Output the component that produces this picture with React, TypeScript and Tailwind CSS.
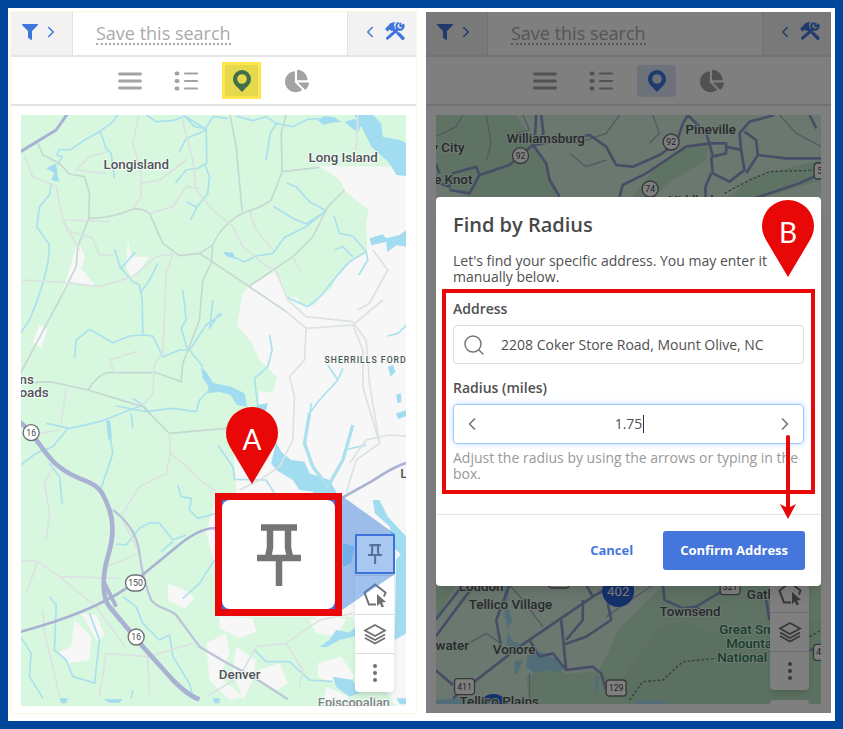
import type { ReactNode } from 'react';
import { FaChartPie, FaFilter } from 'react-icons/fa';
import { ChevronLeft, ChevronRight, Search } from 'lucide-react';
import clsx from 'clsx';

// Both maps are drawn on a grid of three units per pixel.
const ROAD = '#a9b2d3';
const MINOR = '#c6d8d3';
const WATER = '#a2dcf0';

function MarkerIcon({ className }: { className?: string }) {
  return (
    <svg viewBox="0 0 18 22" className={className} fill="currentColor" aria-hidden="true">
      <path
        fillRule="evenodd"
        d="M9 0a9 9 0 0 0-9 9c0 5.500 5 8.500 9 13 4-4.500 9-7.500 9-13a9 9 0 0 0-9-9Zm0 4.200a4.800 4.800 0 1 1 0 9.600 4.800 4.800 0 0 1 0-9.600Z"
      />
    </svg>
  );
}

function ToolsIcon() {
  return (
    <svg viewBox="0 0 24 22" className="w-5" fill="none" stroke="currentColor" aria-hidden="true">
      <path d="M3 19.500 15.500 8.500" strokeWidth="3.600" strokeLinecap="round" />
      <path d="M21.500 2.500a4.300 4.300 0 1 1-5-1.500M18.500 1v4h4" strokeWidth="2.600" />
      <path d="m9 7.500 4 4M16 14l5.500 5.500" strokeWidth="4" strokeLinecap="round" />
      <path d="M0 8.500 3 5l1-.500C6 1 9 0 13 .5c-2 1-2.500 2-2 4l1 1.500-4.500 5-2-2L3 11.500Z" fill="currentColor" stroke="none" />
    </svg>
  );
}

function PushpinIcon({ className }: { className?: string }) {
  return (
    <svg viewBox="0 0 44 62" className={className} fill="none" stroke="currentColor" strokeWidth="6.500" aria-hidden="true">
      <path d="M4 3.500h36M13 4v20l-2 9M31 4v20l2 9M0 34h44M22 34v28" />
    </svg>
  );
}

function PolygonIcon() {
  return (
    <svg viewBox="0 0 24 24" className="size-6" fill="none" stroke="currentColor" strokeWidth="2" aria-hidden="true">
      <path d="M13 21.500H6L1.500 9.500 12 1.500l10.500 8-1.500 4" />
      <path d="m14 11 9 8-4 .5 2 4-2.500 1-1.500-4-3 2.500Z" fill="currentColor" stroke="none" />
    </svg>
  );
}

function LayersIcon() {
  return (
    <svg viewBox="0 0 24 22" className="w-6" fill="none" stroke="currentColor" strokeWidth="1.800" aria-hidden="true">
      <path d="M12 2 22 7.500 12 13 2 7.500Z" />
      <path d="m2 11.500 10 5.500 10-5.500M2 15l10 5.500L22 15" />
    </svg>
  );
}

function DotsIcon() {
  return (
    <svg viewBox="0 0 4 20" className="h-5" fill="currentColor" aria-hidden="true">
      <circle cx="2" cy="3" r="2" />
      <circle cx="2" cy="10" r="2" />
      <circle cx="2" cy="17" r="2" />
    </svg>
  );
}

function BarsIcon() {
  return (
    <svg viewBox="0 0 24 18" className="w-6" stroke="currentColor" strokeWidth="2.800" strokeLinecap="round" aria-hidden="true">
      <path d="M1.500 2h21M1.500 9h21M1.500 16h21" />
    </svg>
  );
}

function ListIcon() {
  return (
    <svg viewBox="0 0 24 20" className="w-6" stroke="currentColor" strokeWidth="2.200" strokeLinecap="round" aria-hidden="true">
      <path d="M11 2.500h12M11 10h12M11 17.500h12" />
      <path d="M2.500 2.500h1M2.500 10h1M2.500 17.500h1" strokeWidth="4" />
    </svg>
  );
}

function PanelHeader() {
  return (
    <header className="flex h-[45px] border-b-2 border-[#e6e6e6]">
      <button aria-label="Filters" className="flex w-[62px] items-center gap-1 border-r border-[#e3e3e3] bg-[#f2f2f2] pb-1 pl-[11px] text-[#3f76dc]">
        <FaFilter className="size-4" />
        <ChevronRight className="size-[18px]" />
      </button>
      <div className="flex flex-1 items-center pl-[23px]">
        <a href="#save" className="border-b-2 border-dotted border-[#aaa] text-lg leading-5 font-medium text-[#ababab]">
          Save this search
        </a>
      </div>
      <button aria-label="Tools" className="flex w-[69px] items-center justify-end gap-1.5 border-l border-[#e3e3e3] bg-[#f2f2f2] pb-1 pr-[11px] text-[#3f76dc]">
        <ChevronLeft className="size-[18px]" />
        <ToolsIcon />
      </button>
    </header>
  );
}

function ViewTabs({ highlight = false }: { highlight?: boolean }) {
  return (
    <nav className="flex h-[49px] items-center justify-center gap-4 border-b-2 border-[#e3e3e3] text-[#a3a3a3]">
      <button aria-label="Table view" className="flex w-10 justify-center"><BarsIcon /></button>
      <button aria-label="List view" className="flex w-10 justify-center"><ListIcon /></button>
      <button
        aria-label="Map view"
        className={clsx(
          'flex w-[39px] items-center justify-center',
          highlight ? 'h-[37px] border-[3px] border-[#ffe64c] bg-[#e5d94b] text-[#3f7049]' : 'h-8 rounded bg-[#d9e3f5] text-[#3f76dc]',
        )}
      >
        <MarkerIcon className="h-[22px]" />
      </button>
      <button aria-label="Chart view" className="flex w-10 justify-center"><FaChartPie className="size-6" /></button>
    </nav>
  );
}

function MapToolbar() {
  const item = 'flex h-[39px] items-center justify-center border-t border-[#ddd]';
  return (
    <div className="absolute right-3 bottom-3.5 flex w-[39px] flex-col rounded bg-white text-[#707070] shadow-md">
      <button aria-label="Find by radius" className="flex h-10 items-center justify-center"><PushpinIcon className="h-5" /></button>
      <button aria-label="Draw area" className={item}><PolygonIcon /></button>
      <button aria-label="Layers" className={item}><LayersIcon /></button>
      <button aria-label="More" className={item}><DotsIcon /></button>
    </div>
  );
}

type Label = { x: number; y: number; text: string; size?: number; fill?: string; spacing?: boolean };

function MapLabels({ labels, halo }: { labels: Label[]; halo: string }) {
  return (
    <g fontFamily="Roboto, sans-serif" fontWeight="500" stroke={halo} strokeWidth="6" paintOrder="stroke" strokeLinejoin="round">
      {labels.map((l) => (
        <text key={l.text} x={l.x} y={l.y} fontSize={l.size ?? 40} fill={l.fill ?? '#50535a'} className={l.spacing ? 'tracking-[3px]' : undefined}>
          {l.text}
        </text>
      ))}
    </g>
  );
}

function Shield({ x, y, text, square = false }: { x: number; y: number; text: string; square?: boolean }) {
  const w = text.length > 2 ? 60 : 48;
  return (
    <g>
      <rect x={x - w / 2} y={y - 24} width={w} height="48" rx={square ? 10 : 24} fill="#fff" stroke="#6c7075" strokeWidth="4" />
      <text x={x} y={y + 9} fontSize="26" textAnchor="middle" fontFamily="Roboto, sans-serif" fill="#45484d">
        {text}
      </text>
    </g>
  );
}

const denverLabels: Label[] = [
  { x: 312, y: 506, text: 'Longisland' },
  { x: 927, y: 486, text: 'Long Island' },
  { x: 975, y: 1088, text: 'SHERRILLS FORD', size: 26, spacing: true },
  { x: 60, y: 1151, text: 'ns' },
  { x: 60, y: 1192, text: 'oads' },
  { x: 658, y: 2036, text: 'Denver' },
  { x: 1202, y: 1434, text: 'L' },
  { x: 955, y: 2122, text: 'Episcopalian', size: 38, fill: '#7d8388' },
];

function DenverMap() {
  return (
    <svg viewBox="63 345 1158 1773" preserveAspectRatio="xMidYMid slice" className="size-full" role="img" aria-label="Map around Denver">
      <rect x="63" y="345" width="1158" height="1773" fill="#d8f7df" />
      <g fill="#f7f7f7">
        <path d="M960 498 1020 540 1040 575 1108 630 1100 670 1103 755 1050 785 1010 830 1000 860 962 890 950 912 925 920 905 910 890 890 865 893 845 845 825 815 750 858 730 878 712 975 755 1025 780 1080 832 1130 820 1178 780 1172 775 1230 700 1320 712 1480 650 1490 620 1600 645 1690 650 1850 1060 1850 1080 1960 1190 2118H1221V500Z" />
        <path d="M235 725 257 770 245 805 290 860 210 845 185 885 215 790ZM385 720 395 770 450 770 400 840 380 800ZM120 975l24 10-18 60-26-20ZM225 1860l50 50-5 70-60 10-40-30 45-20ZM505 1750l60 25 20 20-30 30-50-25ZM245 1840l45 5 25 60-20 20-30-50ZM660 1850l100 5 10 40-50 20-60-30ZM620 1930l60-30 10 60-30 70 70 60-40 10-60-60ZM710 1940l60 40-10 60-30 60-30-90ZM780 2010l60-20 25 60-30 20-55-20ZM930 1860l60-20 50 20-30 50-60-10ZM955 1990l70-20 40 60-30 30-80-30ZM980 2060l70 30-40 28-40-10Z" />
      </g>
      <path d="M905 898h52l-8 12-24 9-18-8ZM1145 345h76v120l-30-50-45-10Z" fill="#d8f7df" />
      <g fill={WATER}>
        <path d="M1065 345 1120 345 1145 370 1150 410 1200 420 1221 430V528l-30-3-25-40-50-45-25-50ZM955 360l20-12 30 4 20 14-30 2-25 6ZM1035 366l30-10 20 20-10 22ZM1110 715l40-12 10 12 40-10 21-15v50l-30-4-28 20-3-30-45 10ZM140 505l30-15 5 40 5 15-25-5 10-20ZM670 755l30 3 10 20-30-10ZM320 1260l12 2 5 50-10 10ZM605 1100l15 15 25 40-15 10-20-30ZM625 1165l20-15 50 10 40 20 8 40-30-5-20-30-35-10-30 5ZM830 1325l15 30 30 25 40 5 15 35 60 20 20 35-5 20h-60l-5-20-40-5-20-30-50-30-15-20ZM770 1215l35-5-5 20-25 5ZM1165 1100l15-5 8 20-15 15ZM1190 1185l14-5 2 25-12 5ZM1190 1240l31-10v18l-25 10ZM1190 1680l31-40V1900l-35 20ZM960 1940l30-20 20-30 40 8 20-20v30l-50 12-40 22ZM1000 2030l60 10 20 40-30 10-40-30ZM1120 1500l20 0 25 50 56 60v70l-40-40-10-60-45-40ZM1030 1630l35 10-10 50-25 10Z" />
      </g>
      <g fill="none" stroke="#abe0ee" strokeWidth="5" strokeLinejoin="round">
        <path d="M355 345 335 370 300 395 255 420 215 448 178 450 172 465 188 470 175 495M303 397 320 445 335 460 345 535M155 550 150 585 120 620 112 680 150 735 145 790 130 850 110 910 90 960 63 1000M440 345 470 365 520 362 555 348 585 380 618 385 640 350 685 355M555 348 620 388M622 385 600 400 560 415 540 455M620 388 622 490 595 505 560 510 528 548M615 492 630 530 625 580 592 622 573 660M560 605 592 622M710 348 760 362 800 350 830 370 880 380 925 358 960 355M830 372 812 400 800 480M862 550 890 560 930 605 980 632 920 672 880 655 820 618M980 632 920 680 855 712 820 760 770 768 735 785 700 770M1003 648 1020 700 1060 708 1100 755M1003 750 1030 740 1060 770M1100 755 1105 780 1078 825M1100 755 1050 785 1010 830 962 890 925 920 865 893M345 748 362 800 400 845 420 855 428 900 430 1005M407 757 362 808M475 790 450 840 425 875M550 870 560 960 545 985 565 1050M660 940 630 985 640 900M668 942 620 975 570 1050M430 1005 460 1008 490 1070 540 1050 570 1050 610 1100M430 1005 390 1008 340 1028 270 988 230 1020 225 1075M140 1270 210 1285 300 1265 430 1215 455 1245M350 1218 440 1235 520 1225 590 1235 600 1200 630 1170M400 1195 430 1215M395 1240 400 1285M205 1285 160 1340 110 1360 63 1395M330 1300 340 1360 300 1480M150 1390 180 1430 188 1510M655 1335 700 1400 705 1438 800 1440 825 1480M810 1005 818 1050 805 1100 765 1135 775 1220M985 1095 1015 1140 960 1200 930 1240M1015 1140 1030 1105M935 1210 930 1255M1035 1350 1100 1335M1221 975 1195 1000 1165 1008M535 1455 545 1490 575 1495 570 1530 595 1555 650 1540M350 1632 380 1635 420 1585 450 1568 480 1570 520 1620 560 1605M520 1625 485 1655M645 1680 600 1750 550 1795M370 1790 410 1820 430 1870 480 1920 510 1905 520 1970 570 2050 580 2090M150 1790 170 1815 165 1950 200 1980 220 2030 290 2050M270 1840 300 1920 285 2050M63 1910 95 1960 90 2030 130 2095M765 1950 800 1985 870 1985 930 2040 1000 2045M400 2070 395 2095" />
        <path d="M930 1240 915 1330 940 1400 985 1460 1030 1380 1060 1275" strokeWidth="10" />
      </g>
      <g fill="none" stroke={MINOR} strokeWidth="5" strokeLinejoin="round">
        <path d="M115 430 130 465 180 490 210 522 255 530 270 580 268 655 235 740 230 800 180 900 145 965 63 1120M268 655Q340 655 400 627 430 625 450 640L490 730 540 767 600 760 640 735Q655 700 680 675T740 635Q790 620 815 600L848 515 845 400 860 345M848 515 960 502M692 345 710 440 728 635M600 760 720 840 860 935M1035 570 985 620 940 710 880 770 750 858M640 735 635 790 610 840 600 960 550 1090 545 1145 470 1118 320 1118Q290 1130 265 1170L150 1145 63 1150M265 1170 330 1190 430 1220 460 1250 510 1300 680 1285" />
      </g>
      <g fill="none" stroke="#dbe2e2" strokeWidth="5" strokeLinejoin="round">
        <path d="M860 935 920 985 1060 975 1150 900M510 1300 512 1360 550 1390 600 1440 650 1475M512 1360 500 1420 420 1460 370 1540M75 470 100 530 170 560 190 660 240 750M418 345 400 430 425 520 425 590 400 627M560 480 480 540 425 550M545 345 580 480 590 570 640 630 700 680 730 740 790 790 830 815 865 900 920 950 1060 965 1100 1020 1110 1150 1140 1330M600 565 560 560 520 620 450 640M325 455 270 470 230 510 320 520M190 660 330 665M200 690 280 715 300 765 340 765M750 635 770 690 820 750M880 770 905 820M63 840 200 848 300 860 400 830 470 770 520 762 500 820 490 1060 465 1090 460 1180 430 1215M330 1080 410 1055M330 1080 345 1118M180 1290 120 1300M200 1165 185 1270M1075 345 1070 450M1120 750 1165 810 1110 910 1075 930M920 985 915 1080 870 1130 885 1190 880 1320 840 1400 780 1440 720 1470M1060 975 1090 1050 1090 1160 1140 1330 1070 1380 1040 1480M1165 1305 1100 1320 1050 1390M1221 1308 1165 1305M63 1680 115 1685 180 1730 360 1735M180 1730 290 1820 380 1945M115 1685 80 1780M160 1400 135 1450 150 1540 140 1620M130 1830 135 1900 160 2000 180 2090M450 2090 445 1970 320 1960 300 2090M445 1970 580 1930M360 1540 420 1660 320 1700M620 2090 720 2030 770 1940 860 1930 960 1860 1060 1840M860 1930 910 2010 900 2060" />
      </g>
      <g fill="none" stroke={ROAD} strokeLinejoin="round">
        <path d="M63 455 170 390 205 340" strokeWidth="9" />
        <path d="M340 1530Q410 1580 420 1660T455 1800C480 1830 500 1820 530 1845L600 1940Q680 1990 760 2030L865 2098" strokeWidth="7" stroke="#bcc5d8" />
        <path d="M60 1896Q270 1840 380 1765L520 1650Q600 1580 650 1585" strokeWidth="8" />
        <path d="M1030 1492 1120 1442Q1190 1395 1225 1388" strokeWidth="8" />
        <path d="M60 1265C130 1320 130 1390 240 1435C310 1460 310 1480 330 1530Q350 1590 325 1670C310 1720 305 1790 330 1820L430 1940 520 2040Q570 2090 600 2098" strokeWidth="14" />
        <path d="M315 1750 350 1820" strokeWidth="12" />
      </g>
      <path d="M180 2095h25l-5 15h-15ZM310 2098h60l-10 10h-30ZM640 2095h20v15h-15ZM1190 2095h31v18h-20Z" fill={WATER} />
      <Shield x={95} y={1298} text="16" />
      <Shield x={408} y={1749} text="150" />
      <Shield x={410} y={1911} text="16" />
      <MapLabels labels={denverLabels} halo="#f4fbf5" />
    </svg>
  );
}

const smokyLabels: Label[] = [
  { x: 262, y: 428, text: 'Williamsburg' },
  { x: 798, y: 401, text: 'Pineville' },
  { x: 36, y: 455, text: 'y City' },
  { x: 44, y: 551, text: 'e Knot' },
  { x: 745, y: 614, text: 'Middlesboro', size: 36 },
  { x: 118, y: 1774, text: 'Loudon' },
  { x: 148, y: 1827, text: 'Tellico Village' },
  { x: 720, y: 1849, text: 'Townsend' },
  { x: 982, y: 1798, text: 'Gatlinburg' },
  { x: 48, y: 1950, text: 'water' },
  { x: 220, y: 1963, text: 'Vonore' },
  { x: 120, y: 2118, text: 'Tellico Plains' },
  { x: 899, y: 1902, text: 'Great Smoky', fill: '#2f7d5c' },
  { x: 920, y: 1944, text: 'Mountains', fill: '#2f7d5c' },
  { x: 893, y: 1986, text: 'National Park', fill: '#2f7d5c' },
];

function SmokyMap() {
  return (
    <svg viewBox="48 345 1158 1767" preserveAspectRatio="xMidYMid slice" className="size-full" role="img" aria-label="Map around the Great Smoky Mountains">
      <rect x="48" y="345" width="1158" height="1767" fill="#d6f0df" />
      <path d="M48 345h240l60 85 45 100 30 60H150l-102-40ZM640 590 700 510 790 450 870 430 860 480 760 540 700 592ZM930 590l70-60 206-50v60l-180 55ZM330 2112l-10-80 60-30 60 20 100-10 60-130 200-190h550v420ZM48 1755h60l-60 110Z" fill="#bfe6c8" />
      <path d="M590 2060 720 1880 800 1860 860 1900 1206 1860V2112H620Z" fill="#b6e0c1" />
      <g fill={WATER}>
        <path d="M255 1755h15l-5 60 15 50-20 20 20 40 20 5-10 25-30-20 5-50-10-40ZM325 1965l40-10 40 20 30 20-10 25-30-10-50 10-25-20ZM285 1985l25-5-15 40-10 5ZM525 2030l15 0-5 40 5 15-12-15ZM48 2100l80-5 80 10v7H48ZM650 2100h50l40 5v7h-90Z" />
      </g>
      <g fill="none" stroke="#a9b2c4" strokeWidth="4">
        <path d="M48 410 110 380 130 345M200 345 215 430 200 480M310 345 330 390 290 400M450 460 500 500 560 480M600 345 560 400 470 430M700 345 720 400 690 430M1206 440 1130 400 1080 345M130 1940 200 1900 245 1930M270 1755 310 1800 370 1880M560 1850 700 1755M330 2020 330 2100" />
      </g>
      <g fill="none" stroke="#8f9bc9" strokeWidth="8" strokeLinejoin="round">
        <path d="M48 545 90 560 100 520 170 500 180 525 270 495 340 435 380 490 390 540 420 590M350 345 345 435M365 345 372 400 345 435M345 435 480 410 510 405 560 440 590 495 640 500 720 465 770 430 790 370 805 345M805 345 860 400 870 430 800 440 740 480 680 520 610 555 600 590M870 430 920 430 920 460 880 470 870 430M920 440 965 450 975 510 930 545 880 520 875 470M875 520 858 560 858 600M965 450 960 400 990 365 1065 345M975 395 1010 420 1015 465 980 520M1015 465 1100 475 1206 475M990 600 1080 570 1140 550 1206 520M1170 345 1190 385M48 490 60 520M180 525 150 580 90 570" />
        <path d="M48 1860 130 1755M48 1910 160 1760M100 2095 300 1940 520 1790 580 1755M230 1860 245 1940M270 1755 230 1860M425 1860 440 2010 400 1960 360 1970 330 1920M440 1920 490 1860 490 1800M430 1935 500 1910 575 1860 565 1810M440 2010 520 2000 545 2020 560 2070M500 1755 520 1790M730 1755 735 1800 790 1825 830 1820 905 1775M830 1820 850 1840M1040 1800 1050 1860M48 2010 100 2055M1170 1950 1206 1945" />
      </g>
      <path d="M915 580 990 540 1050 515 1206 510M630 2100 670 2045 730 2040 790 1985 890 1975M1170 1910 1206 1890" fill="none" stroke="#6b8078" strokeWidth="4" strokeDasharray="8 6" />
      <Shield x={303} y={467} text="92" />
      <Shield x={755} y={426} text="92" />
      <Shield x={692} y={567} text="74" />
      <Shield x={1208} y={513} text="58" square />
      <Shield x={418} y={1740} text="321" square />
      <Shield x={932} y={1760} text="321" square />
      <Shield x={135} y={2060} text="411" square />
      <Shield x={590} y={2064} text="129" square />
      <Shield x={1212} y={1957} text="441" square />
      <g fill="#2b62d9">
        <circle cx="596" cy="1773" r="48" />
        <circle cx="222" cy="2128" r="46" />
      </g>
      <text x="596" y="1789" fontSize="40" textAnchor="middle" fontFamily="Roboto, sans-serif" fill="#fff">402</text>
      <MapLabels labels={smokyLabels} halo="#dcf3e3" />
    </svg>
  );
}

function StepPin({ letter, className }: { letter: string; className?: string }) {
  return (
    <div className={clsx('absolute h-[77px] w-[52px]', className)}>
      <svg viewBox="0 0 52 77" className="absolute inset-0" fill="#e90808" aria-hidden="true">
        <path d="M26 0A26 26 0 0 0 0 26c0 6 2 10 4 14l22 37 22-37c2-4 4-8 4-14A26 26 0 0 0 26 0Z" />
      </svg>
      <span className="relative block pt-3 text-center font-['Lato',sans-serif] text-[28px] leading-10 text-white">{letter}</span>
    </div>
  );
}

// Magnified view of the pushpin button, joined to it by a light-beam wedge.
function ButtonCallout() {
  return (
    <>
      <svg viewBox="0 0 53 114" className="absolute right-[11px] bottom-24 h-[114px] w-[53px]" fill="#4284de" fillOpacity="0.5" aria-hidden="true">
        <path d="M0 0 53 38V78L0 114Z" />
      </svg>
      <div className="absolute right-[11px] bottom-[132px] flex size-10 items-center justify-center border-2 border-[#3f73d9] bg-[#a8c8f2] text-[#56719f]">
        <PushpinIcon className="h-5" />
      </div>
      <div className="absolute right-16 bottom-[90px] h-[123px] w-[127px] border-[7px] border-[#e90808] bg-[#4472dd]">
        <div className="flex size-full items-center justify-center rounded-lg bg-white text-[#757575]">
          <PushpinIcon className="h-[62px]" />
        </div>
      </div>
      <StepPin letter="A" className="right-[128px] bottom-[222px]" />
    </>
  );
}

function Panel({ children, className }: { children: ReactNode; className?: string }) {
  return <section className={clsx('relative min-w-0 flex-1 bg-white', className)}>{children}</section>;
}

function RadiusDialog() {
  return (
    <div role="dialog" aria-labelledby="radius-title" className="absolute inset-x-2.5 top-[185px] rounded bg-white text-[#505050] shadow-lg">
      <div className="px-[17px] pt-4">
        <h2 id="radius-title" className="text-xl leading-6 font-semibold text-[#484848]">Find by Radius</h2>
        <p className="mt-4 pr-8 text-sm leading-4">Let's find your specific address. You may enter it manually below.</p>
      </div>
      <form onSubmit={(e) => e.preventDefault()}>
        <div className="mx-1.5 mt-1 border-4 border-[#e90808] px-[7px] pt-1.5 pb-2">
          <label htmlFor="address" className="block text-sm leading-5 font-semibold">Address</label>
          <div className="mt-1.5 flex h-[39px] items-center rounded border border-[#ddd] pl-2">
            <Search className="size-6 shrink-0 text-[#777]" strokeWidth={1.5} />
            <input id="address" defaultValue="2208 Coker Store Road, Mount Olive, NC" className="ml-[15px] min-w-0 flex-1 text-sm outline-none" />
          </div>
          <label htmlFor="radius" className="mt-3.5 block text-sm leading-5 font-semibold">Radius (miles)</label>
          <div className="relative mt-1.5 flex h-10 items-center justify-between rounded border border-[#9cc8fa] px-2 shadow-[0_0_6px_#bddcff]">
            <button type="button" aria-label="Decrease radius"><ChevronLeft className="size-5 text-[#777]" /></button>
            <input id="radius" defaultValue="1.75" className="w-20 text-center text-sm outline-none" />
            <span className="absolute left-1/2 ml-3.5 h-[18px] w-px bg-[#333]" />
            <button type="button" aria-label="Increase radius"><ChevronRight className="size-5 text-[#777]" /></button>
          </div>
          <p className="mt-1.5 text-sm leading-4 text-[#999]">Adjust the radius by using the arrows or typing in the box.</p>
        </div>
        <div className="mt-5 flex items-center justify-end gap-[30px] border-t border-[#e5e5e5] px-4 py-4 text-[13px] font-bold">
          <button type="button" className="text-[#4476dc]">Cancel</button>
          <button type="submit" className="h-[39px] rounded-[3px] bg-[#4476dc] px-[17px] text-white">Confirm Address</button>
        </div>
      </form>
      <StepPin letter="B" className="top-[3px] right-[7px]" />
      <svg viewBox="0 0 16 84" className="absolute top-[238px] right-[25px] h-[84px] w-4" fill="none" stroke="#e90808" aria-hidden="true">
        <path d="M8 2v76" strokeWidth="4" strokeLinecap="round" />
        <path d="m0 69 8 4 8-4-8 15Z" fill="#e90808" stroke="none" />
      </svg>
    </div>
  );
}

export default function App() {
  return (
    <main className="flex gap-2.5 border-8 border-[#00469b] bg-white pt-1 pr-1 pb-2 pl-[3px] font-['Open_Sans',sans-serif]">
      <Panel className="pb-[7px] outline outline-[#fff6e0]">
        <PanelHeader />
        <ViewTabs highlight />
        <div className="relative mx-2.5 mt-[9px] aspect-[385/591] overflow-hidden">
          <DenverMap />
          <MapToolbar />
          <ButtonCallout />
        </div>
      </Panel>
      <Panel>
        <PanelHeader />
        <ViewTabs />
        <div className="relative mx-2.5 mt-[9px] aspect-[385/589] overflow-hidden">
          <SmokyMap />
          <MapToolbar />
          <div className="absolute right-3 -bottom-1 h-2 w-[39px] rounded bg-white" />
        </div>
        <div className="absolute inset-0 bg-black/50" />
        <RadiusDialog />
      </Panel>
    </main>
  );
}
